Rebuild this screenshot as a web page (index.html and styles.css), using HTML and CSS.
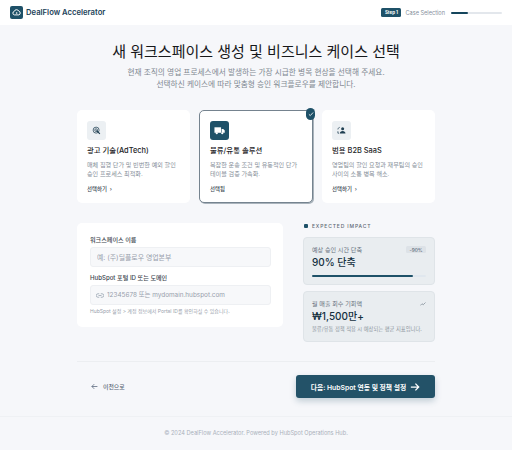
FILE: index.html
```html
<!DOCTYPE html>
<html lang="ko">
<head>
<meta charset="utf-8">
<title>DealFlow Accelerator</title>
<link rel="stylesheet" href="styles.css">
</head>
<body>
<header class="topbar">
  <div class="brand">
    <span class="logo"><svg viewBox="0 0 12 12" width="9" height="9"><path d="M3.2 9.2A2.4 2.4 0 0 1 3 4.5 3.2 3.2 0 0 1 9 4.2a2.6 2.6 0 0 1 .2 5H3.2z" fill="none" stroke="#fff" stroke-width="1.3"/><circle cx="6.2" cy="6.6" r="1.1" fill="#fff"/></svg></span>
    <span class="brand-name">DealFlow Accelerator</span>
  </div>
  <div class="progress">
    <span class="step">Step 1</span>
    <span class="step-name">Case Selection</span>
    <span class="track"><span class="fill"></span></span>
  </div>
</header>
<main class="page">
  <section class="hero">
    <h1>새 워크스페이스 생성 및 비즈니스 케이스 선택</h1>
    <p>현재 조직의 영업 프로세스에서 발생하는 가장 시급한 병목 현상을 선택해 주세요.<br>선택하신 케이스에 따라 맞춤형 승인 워크플로우를 제안합니다.</p>
  </section>
  <section class="cards">
    <article class="card">
      <span class="icon"><svg viewBox="0 0 12 12" width="9" height="9" fill="none" stroke="#1f3f52" stroke-width="1"><circle cx="5.5" cy="5.5" r="4"/><circle cx="5.5" cy="5.5" r="1.8"/><path d="M6 6l4.5 4.5" stroke-width="1.5"/></svg></span>
      <h2>광고 기술(AdTech)</h2>
      <p>매체 집행 단가 및 빈번한 예외 할인<br>승인 프로세스 최적화.</p>
      <span class="link">선택하기 &nbsp;›</span>
    </article>
    <article class="card selected">
      <span class="badge"><svg viewBox="0 0 10 10" width="6" height="6" fill="none" stroke="#fff" stroke-width="1.4"><path d="M1.5 5.5l2.3 2.2L8.5 2.5"/></svg></span>
      <span class="icon"><svg viewBox="0 0 12 12" width="11" height="11" fill="#fff"><path d="M.5 2.5h7.2v6H.5z"/><path d="M8.3 4.3h1.8l1.6 1.8v2.4H8.3z"/><circle cx="3" cy="9" r="1.2"/><circle cx="9" cy="9" r="1.2"/></svg></span>
      <h2>물류/유통 솔루션</h2>
      <p>복잡한 운송 조건 및 유동적인 단가<br>테이블 검증 가속화.</p>
      <span class="link">선택됨</span>
    </article>
    <article class="card">
      <span class="icon"><svg viewBox="0 0 12 12" width="9" height="9" fill="#1f3f52"><circle cx="7.5" cy="3.5" r="2"/><path d="M3.7 10c0-2.2 1.7-3.5 3.8-3.5s3.8 1.3 3.8 3.5z"/><path d="M3.6 1.8C2 2.3 1.2 3.3 1.2 4.6" fill="none" stroke="#1f3f52"/><path d="M1.2 7v2.6h1.4" fill="none" stroke="#1f3f52"/></svg></span>
      <h2>범용 B2B SaaS</h2>
      <p>영업팀의 할인 요청과 재무팀의 승인<br>사이의 소통 병목 해소.</p>
      <span class="link">선택하기 &nbsp;›</span>
    </article>
  </section>
  <section class="columns">
    <form class="form-card">
      <label class="field-label" for="ws">워크스페이스 이름</label>
      <div class="input"><input id="ws" class="input-name" placeholder="예: (주)딜플로우 영업본부"></div>
      <label class="field-label second" for="hub">HubSpot 포털 ID 또는 도메인</label>
      <div class="input"><svg viewBox="0 0 16 10" width="8" height="5" fill="none" stroke="#8d99a8" stroke-width="1.4"><path d="M6.5 1.5H4a3.2 3.2 0 0 0 0 7h2.5M9.5 1.5H12a3.2 3.2 0 0 1 0 7H9.5M5 5h6"/></svg><input id="hub" class="input-portal" placeholder="12345678 또는 mydomain.hubspot.com"></div>
      <p class="hint">HubSpot 설정 &gt; 계정 정보에서 Portal ID를 확인하실 수 있습니다.</p>
    </form>
    <aside class="impact">
      <h3><span class="mark"></span>EXPECTED IMPACT</h3>
      <div class="metric">
        <div class="metric-top"><span>예상 승인 시간 단축</span><span class="tag">-90%</span></div>
        <div class="value">90% 단축</div>
        <div class="bar"><span class="bar-fill"></span></div>
      </div>
      <div class="metric">
        <div class="metric-top"><span>월 매출 회수 기회액</span><svg viewBox="0 0 12 8" width="6" height="4" fill="none" stroke="#4b5a6a" stroke-width="1"><path d="M.5 7l3.5-3.5 2.5 2L11 1"/></svg></div>
        <div class="value money">₩1,500만+</div>
        <p class="note">물류/유통 정책 적용 시 예상되는 평균 지표입니다.</p>
      </div>
    </aside>
  </section>
  <nav class="actions">
    <a class="back"><svg viewBox="0 0 12 12" width="7" height="7" fill="none" stroke="#56657a" stroke-width="1.3"><path d="M11 6H1.5M5.5 2L1.5 6l4 4"/></svg>이전으로</a>
    <a class="next">다음: HubSpot 연동 및 정책 설정<svg viewBox="0 0 12 12" width="10" height="10" fill="none" stroke="#fff" stroke-width="1.5"><path d="M1 6h9.5M6.5 2l4 4-4 4"/></svg></a>
  </nav>
</main>
<footer class="footer">© 2024 DealFlow Accelerator. Powered by HubSpot Operations Hub.</footer>
</body>
</html>
```
FILE: styles.css
```css
* { box-sizing: border-box; }
html, body { margin: 0; height: 450px; overflow: hidden; }
body {
  background: #f6f7fa;
  color: #191c1e;
  font-family: Inter, "Noto Sans CJK KR", sans-serif;
  display: flex;
  flex-direction: column;
}
.topbar {
  height: 25px;
  background: #fff;
  display: flex;
  align-items: center;
  justify-content: space-between;
  padding: 0 10px;
}
.brand { display: flex; align-items: center; gap: 3px; }
.logo {
  width: 13px; height: 13px;
  border-radius: 2px;
  background: #1e5168;
  display: flex; align-items: center; justify-content: center;
}
.brand-name { font-size: 7.7px; font-weight: 600; color: #1b4258; }
.progress { display: flex; align-items: center; }
.step {
  background: #1e5168; color: #fff;
  font-size: 4.5px; font-weight: 700;
  height: 9px; width: 20px;
  border-radius: 1.5px;
  display: flex; align-items: center; justify-content: center;
}
.step-name { font-size: 5.6px; color: #858f9b; margin-left: 4px; }
.track { width: 51px; height: 2px; background: #e3e7ec; margin-left: 6px; border-radius: 1px; }
.fill { display: block; width: 17px; height: 100%; background: #14455c; border-radius: 1px; }
.page { width: 358px; margin: 0 auto; flex: 1; }
.hero { text-align: center; padding-top: 18px; }
.hero h1 { margin: 0; font-size: 15px; line-height: 18px; font-weight: 400; color: #16181a; }
.hero p { margin: 6px 0 0; font-size: 7.7px; line-height: 12px; color: #7f8791; }
.cards { display: grid; grid-template-columns: 113px 114px 113px; gap: 9px; margin-top: 19px; }
.card {
  position: relative;
  height: 93px;
  background: #fff;
  border-radius: 5px;
  padding: 11px 10px 0;
  display: flex; flex-direction: column; align-items: flex-start;
}
.selected { border: 1px solid #75838f; box-shadow: 1px 1px 0 #a9b3bb; padding: 10px 10px 0 10px; }
.icon {
  width: 19px; height: 19px;
  border-radius: 3px;
  background: #ecf0f3;
  display: flex; align-items: center; justify-content: center;
}
.selected .icon { background: #1e5168; }
.badge {
  position: absolute; top: -3px; right: -3px;
  width: 9px; height: 12px;
  border-radius: 5px;
  background: #1e5168;
  display: flex; align-items: center; justify-content: center;
}
.card h2 { margin: 5px 0 0; font-size: 7.4px; line-height: 11px; font-weight: 500; color: #1c2226; }
.card p { margin: 4px 0 0; font-size: 6.1px; line-height: 9.2px; color: #858e98; }
.link { margin-top: 6.5px; font-size: 5.4px; line-height: 8px; font-weight: 500; color: #3d4853; }
.columns { display: grid; grid-template-columns: 206px 132px; gap: 20px; margin-top: 20px; }
.form-card { height: 104px; background: #fff; border-radius: 5px; padding: 12px 12px 0 13px; }
.field-label { display: block; font-size: 6.1px; line-height: 9px; font-weight: 500; color: #3b444d; }
.second { margin-top: 6px; }
.input {
  height: 20px; margin-top: 3px;
  background: #f7f8fa;
  border: 1px solid #eef0f3;
  border-radius: 3px;
  display: flex; align-items: center; gap: 3px;
  padding: 0 5px;
}
.input input {
  flex: 1; min-width: 0;
  border: 0; outline: 0; padding: 0;
  background: transparent;
  font-family: inherit;
  color: #333;
}
.input-name { font-size: 6.9px; margin-left: 1px; }
.input-portal { font-size: 6.4px; }
.input input::placeholder { color: #98a0ac; opacity: 1; }
.hint { margin: 2.5px 0 0; font-size: 5px; line-height: 7px; color: #98a0ab; }
.impact h3 {
  margin: -1px 0 0; height: 8px;
  display: flex; align-items: center; gap: 4px;
  font-size: 5px; font-weight: 500; letter-spacing: 0.85px;
  color: #5c6874;
  padding-left: 1px;
}
.mark { width: 4px; height: 4px; border-radius: 1px; background: #1e5168; }
.metric {
  margin-top: 7px;
  background: #e9edf0;
  border: 1px solid #dfe4e8;
  border-radius: 4px;
  padding: 8px 8px 0;
  height: 48px;
}
.metric + .metric { height: 51px; margin-top: 6px; }
.metric-top {
  display: flex; justify-content: space-between; align-items: center;
  height: 7px;
  font-size: 6.1px; color: #67727e;
}
.tag {
  background: #dde2e7; color: #5c6a78;
  font-size: 4.8px; font-weight: 500;
  width: 20px; height: 7px;
  display: flex; align-items: center; justify-content: center;
  border-radius: 1.5px;
}
.value { margin-top: 2.5px; font-size: 10px; line-height: 13px; font-weight: 500; color: #14303f; }
.money { margin-top: 3px; }
.bar { margin-top: 6px; height: 2px; background: #e0e7ee; border-radius: 1px; }
.bar-fill { display: block; width: 89%; height: 100%; background: #1e5168; border-radius: 1px; }
.note { margin: 3px 0 0; font-size: 5.3px; line-height: 7px; color: #8e97a1; }
.actions {
  margin-top: 19px; padding-top: 13px;
  border-top: 1px solid #eceef1;
  display: flex; justify-content: space-between; align-items: center;
}
.back {
  display: flex; align-items: center; gap: 5px;
  margin-left: 14px;
  font-size: 5.9px; font-weight: 500; color: #5a6676;
}
.next {
  width: 139px; height: 23px;
  background: #235268; color: #fff;
  border-radius: 3px;
  box-shadow: 0 3px 6px rgba(30, 81, 104, 0.25);
  display: flex; align-items: center; justify-content: center; gap: 4px;
  font-size: 6.8px; font-weight: 600;
}
.footer {
  width: 100%; height: 34px;
  border-top: 1px solid #eff1f4;
  text-align: center;
  padding-top: 12px;
  font-size: 5.65px; line-height: 8px;
  color: #aab1bb;
}
```
